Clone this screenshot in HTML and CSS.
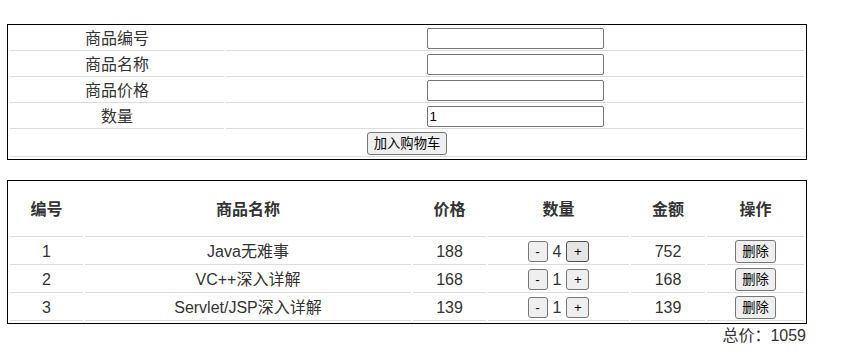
FILE: index.html
```html
<!DOCTYPE html>
<html>
<head>
	<meta charset="utf-8">
	<title>购物车</title>
<link rel="stylesheet" href="styles.css">
</head>

<body>
<div id="cart">

	<table id="form_table">
		<tr>
			<td class="label">商品编号</td>
			<td><input type="text" class="field"></td>
		</tr>
		<tr>
			<td class="label">商品名称</td>
			<td><input type="text" class="field"></td>
		</tr>
		<tr>
			<td class="label">商品价格</td>
			<td><input type="text" class="field"></td>
		</tr>
		<tr>
			<td class="label">数量</td>
			<td><input type="text" class="field" value="1"></td>
		</tr>
		<tr>
			<td colspan="2"><button class="btn btn_cn">加入购物车</button></td>
		</tr>
	</table>

	<table id="list_table">
		<tr>
			<th class="col_id">编号</th>
			<th class="col_name">商品名称</th>
			<th class="col_price">价格</th>
			<th class="col_count">数量</th>
			<th class="col_sum">金额</th>
			<th class="col_op">操作</th>
		</tr>
		<tr>
			<td>1</td>
			<td>Java无难事</td>
			<td>188</td>
			<td><div class="count"><button class="btn btn_step minus">-</button>4<button class="btn btn_step plus hover">+</button></div></td>
			<td>752</td>
			<td><button class="btn btn_cn">删除</button></td>
		</tr>
		<tr>
			<td>2</td>
			<td>VC++深入详解</td>
			<td>168</td>
			<td><div class="count"><button class="btn btn_step minus">-</button>1<button class="btn btn_step plus">+</button></div></td>
			<td>168</td>
			<td><button class="btn btn_cn">删除</button></td>
		</tr>
		<tr>
			<td>3</td>
			<td>Servlet/JSP深入详解</td>
			<td>139</td>
			<td><div class="count"><button class="btn btn_step minus">-</button>1<button class="btn btn_step plus">+</button></div></td>
			<td>139</td>
			<td><button class="btn btn_cn">删除</button></td>
		</tr>
	</table>

	<div id="total">总价：1059</div>

</div>
</body>
</html>
```

FILE: styles.css
```css
body {
	margin: 24px 0 0 7px;
	font-family: "Liberation Sans", "Noto Sans CJK SC", sans-serif;
	font-size: 16px;
	line-height: 21px;
	color: #333;
	background: #fff;
}
div#cart {
	width: 800px;
}
table {
	width: 800px;
	border: 1px solid #000;
	border-spacing: 2px;
	table-layout: fixed;
}
td, th {
	padding: 1px;
	text-align: center;
	border-bottom: 1px solid #ddd;
	box-sizing: border-box;
	vertical-align: middle;
}
td.label {
	width: 214px;
}
input.field {
	display: block;
	box-sizing: border-box;
	width: 177px;
	height: 21px;
	margin: 0 auto;
	padding: 1px 2px;
	font-family: "Liberation Sans", "Noto Sans CJK SC", sans-serif;
	font-size: 13.33px;
	color: #000;
	border: 1px solid #767676;
	border-radius: 2px;
}
.btn {
	display: block;
	box-sizing: border-box;
	margin: 0 auto;
	padding: 0 6px;
	font-family: "Liberation Sans", "Noto Sans CJK SC", sans-serif;
	font-size: 13.33px;
	color: #000;
	background: #efefef;
	border: 1px solid #767676;
	border-radius: 3px;
}
.btn_cn {
	height: 23px;
	line-height: 19px;
}
.btn_step {
	height: 21px;
	line-height: 17px;
	margin: 0;
	padding: 0;
	text-align: center;
}
.btn_step.minus {
	width: 20px;
}
.btn_step.plus {
	width: 23px;
}
.btn.hover {
	background: #e5e5e5;
	border-color: #4f4f4f;
}
div.count {
	display: flex;
	justify-content: center;
	align-items: center;
	gap: 5px;
	height: 23px;
}
table#list_table {
	margin-top: 20px;
}
table#list_table td {
	line-height: 23px;
}
th {
	padding: 16px 1px;
	font-weight: bold;
}
th.col_id { width: 73px; }
th.col_name { width: 326px; }
th.col_price { width: 73px; }
th.col_count { width: 141px; }
th.col_sum { width: 74px; }
th.col_op { width: 97px; }
div#total {
	text-align: right;
	margin-top: 1px;
	padding-right: 1px;
}
```
